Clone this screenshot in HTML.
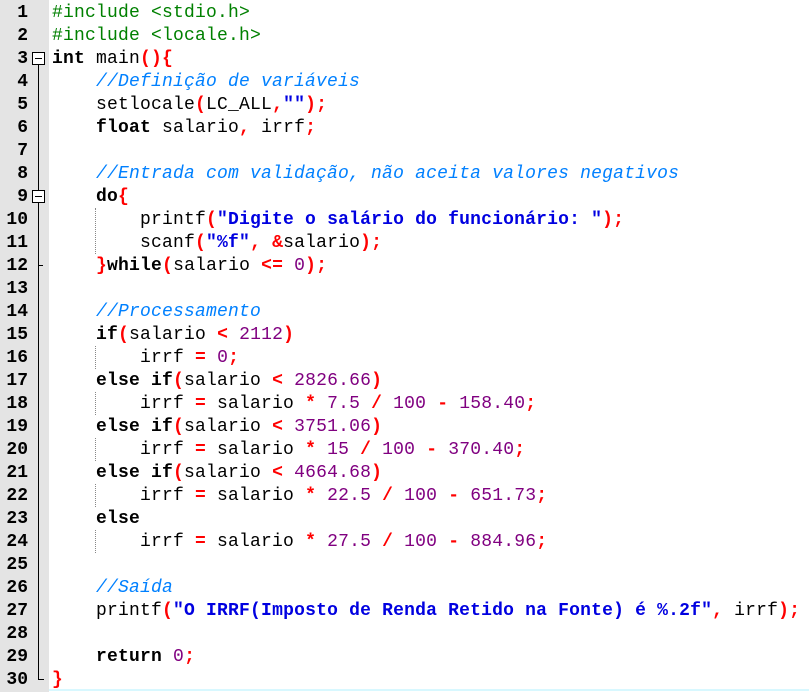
<!DOCTYPE html>
<html><head><meta charset="utf-8"><style>
html,body{margin:0;padding:0;background:#fff;width:809px;height:692px;overflow:hidden;position:relative}
.g{position:absolute;left:0;top:0;width:49px;height:692px;background:#e4e4e4}
.ln{position:absolute;left:0;width:28px;text-align:right;font:bold 18px/23px "Liberation Mono",monospace;color:#000}
.code{position:absolute;left:52px;top:2px;font:18px/23px "Liberation Mono",monospace;letter-spacing:0.2px;white-space:pre;color:#000}
.k{font-weight:bold}
.o{color:#f00;font-weight:bold}
.n{color:#800080}
.s{color:#0000e0;font-weight:bold}
.c{color:#0080ff;font-style:italic}
.p{color:#008000}
.guide{position:absolute;left:95px;width:0;border-left:1px dotted #888}
.fl{position:absolute;background:#000}
.box{position:absolute;left:32px;width:11px;height:11px;border:1px solid #000;background:#fff}
.box:after{content:"";position:absolute;left:2px;top:5px;width:7px;height:1px;background:#000}
</style></head><body>
<div class="g"></div>
<div class="ln" style="top:2px">1<br>2<br>3<br>4<br>5<br>6<br>7<br>8<br>9<br>10<br>11<br>12<br>13<br>14<br>15<br>16<br>17<br>18<br>19<br>20<br>21<br>22<br>23<br>24<br>25<br>26<br>27<br>28<br>29<br>30</div>
<div class="fl" style="left:38px;top:65px;width:1px;height:614px"></div>
<div class="fl" style="left:38px;top:679px;width:6px;height:1px"></div>
<div class="fl" style="left:38px;top:265px;width:5px;height:1px"></div>
<div class="box" style="top:52px"></div>
<div class="box" style="top:190px"></div>
<div class="guide" style="top:208px;height:46px"></div>
<div class="guide" style="top:346px;height:23px"></div>
<div class="guide" style="top:392px;height:23px"></div>
<div class="guide" style="top:438px;height:23px"></div>
<div class="guide" style="top:484px;height:23px"></div>
<div class="guide" style="top:530px;height:23px"></div>
<div style="position:absolute;left:49px;top:689px;width:760px;height:2px;background:#d8f8ff"></div>
<div class="code"><span class="p">#include &lt;stdio.h&gt;</span>
<span class="p">#include &lt;locale.h&gt;</span>
<span class="k">int</span> main<span class="o">(){</span>
    <span class="c">//Definição de variáveis</span>
    setlocale<span class="o">(</span>LC_ALL<span class="o">,</span><span class="s">""</span><span class="o">);</span>
    <span class="k">float</span> salario<span class="o">,</span> irrf<span class="o">;</span>

    <span class="c">//Entrada com validação, não aceita valores negativos</span>
    <span class="k">do</span><span class="o">{</span>
        printf<span class="o">(</span><span class="s">"Digite o salário do funcionário: "</span><span class="o">);</span>
        scanf<span class="o">(</span><span class="s">"%f"</span><span class="o">,</span> <span class="o">&amp;</span>salario<span class="o">);</span>
    <span class="o">}</span><span class="k">while</span><span class="o">(</span>salario <span class="o">&lt;=</span> <span class="n">0</span><span class="o">);</span>

    <span class="c">//Processamento</span>
    <span class="k">if</span><span class="o">(</span>salario <span class="o">&lt;</span> <span class="n">2112</span><span class="o">)</span>
        irrf <span class="o">=</span> <span class="n">0</span><span class="o">;</span>
    <span class="k">else if</span><span class="o">(</span>salario <span class="o">&lt;</span> <span class="n">2826.66</span><span class="o">)</span>
        irrf <span class="o">=</span> salario <span class="o">*</span> <span class="n">7.5</span> <span class="o">/</span> <span class="n">100</span> <span class="o">-</span> <span class="n">158.40</span><span class="o">;</span>
    <span class="k">else if</span><span class="o">(</span>salario <span class="o">&lt;</span> <span class="n">3751.06</span><span class="o">)</span>
        irrf <span class="o">=</span> salario <span class="o">*</span> <span class="n">15</span> <span class="o">/</span> <span class="n">100</span> <span class="o">-</span> <span class="n">370.40</span><span class="o">;</span>
    <span class="k">else if</span><span class="o">(</span>salario <span class="o">&lt;</span> <span class="n">4664.68</span><span class="o">)</span>
        irrf <span class="o">=</span> salario <span class="o">*</span> <span class="n">22.5</span> <span class="o">/</span> <span class="n">100</span> <span class="o">-</span> <span class="n">651.73</span><span class="o">;</span>
    <span class="k">else</span>
        irrf <span class="o">=</span> salario <span class="o">*</span> <span class="n">27.5</span> <span class="o">/</span> <span class="n">100</span> <span class="o">-</span> <span class="n">884.96</span><span class="o">;</span>

    <span class="c">//Saída</span>
    printf<span class="o">(</span><span class="s">"O IRRF(Imposto de Renda Retido na Fonte) é %.2f"</span><span class="o">,</span> irrf<span class="o">);</span>

    <span class="k">return</span> <span class="n">0</span><span class="o">;</span>
<span class="o">}</span></div>
</body></html>
